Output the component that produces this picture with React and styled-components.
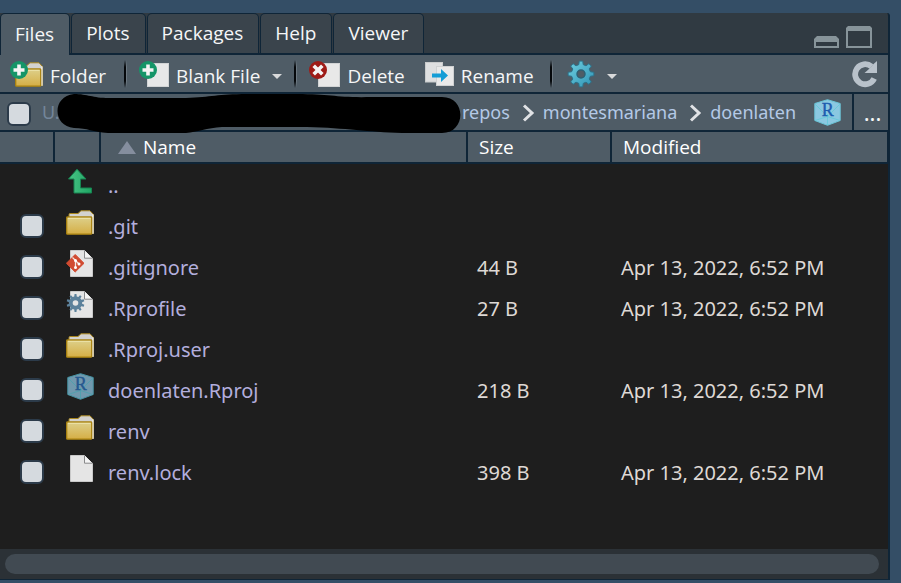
import React from "react";
import styled, { createGlobalStyle } from "styled-components";

const color = {
  desktop: "#344e66",
  line: "#0f2537",
  tabStrip: "#303a42",
  tab: "#3a444c",
  bar: "#4f5c66",
  text: "#f5f6f7",
  path: "#b4c9e6",
  body: "#1e1e1e",
  file: "#b3aedd",
  meta: "#ded9d5",
  box: "#d5dadf",
};

const GlobalStyle = createGlobalStyle`
  * { box-sizing: border-box; }
  body {
    margin: 0;
    background: ${color.desktop};
    font-family: "Open Sans", "Noto Sans", sans-serif;
  }
  button { font: inherit; color: inherit; background: none; border: 0; padding: 0; }
  a { color: inherit; text-decoration: none; }
  svg { display: block; flex: none; }
`;

const Desktop = styled.div`
  min-height: 100vh;
  padding: 13px 11px 3px 0;
  display: flex;
`;

const Panel = styled.section`
  flex: 1;
  min-width: 0;
  display: flex;
  flex-direction: column;
  border-right: 2px solid ${color.line};
  border-bottom: 1px solid ${color.line};
  border-top-right-radius: 3px;
  background: ${color.body};
  overflow: hidden;
`;

const TabStrip = styled.div`
  display: flex;
  align-items: flex-start;
  height: 42px;
  background: linear-gradient(${color.line}, ${color.line}) bottom / 100% 2px no-repeat ${color.tabStrip};
`;

const TabList = styled.div`
  display: flex;
`;

const Tab = styled.button`
  height: ${(p) => (p.$active ? 41 : 39)}px;
  margin: 1px 2px 0 1px;
  && {
    padding: 0 15px 0 14px;
    background: ${(p) => (p.$active ? color.bar : color.tab)};
    color: ${color.text};
  }
  border-radius: 4px 4px 0 0;
  box-shadow: 0 0 0 1px ${color.line};
  font-size: 19px;
  line-height: 39px;
`;

const WindowButtons = styled.div`
  margin-left: auto;
  padding: 13px 16px 0 0;
  display: flex;
  align-items: flex-end;
  gap: 7px;
`;

const Toolbar = styled.div`
  height: 39px;
  display: flex;
  align-items: center;
  padding: 0 10px;
  background: ${color.bar};
  border-bottom: 2px solid ${color.line};
  color: ${color.text};
  font-size: 19px;
`;

const ToolButton = styled.button`
  display: flex;
  align-items: center;
  height: 37px;
  margin-right: ${(p) => p.$after || 0}px;
  && { color: ${color.text}; }
`;

const ToolLabel = styled.span`
  padding: 5px 0 0 7px;
  line-height: 26px;
`;

const Caret = styled.span`
  margin: 5px 0 0 12px;
  border: 5px solid transparent;
  border-top-color: #d9dadb;
  border-bottom: 0;
`;

const Separator = styled.span`
  width: 3px;
  height: 28px;
  margin: 0 ${(p) => p.$after || 12}px 0 ${(p) => p.$before || 18}px;
  background:
    linear-gradient(transparent, #05080b 25%, #05080b 75%, transparent) left / 2px 100% no-repeat,
    linear-gradient(transparent, #6d7881 25%, #6d7881 75%, transparent) right / 1px 100% no-repeat;
`;

const Spacer = styled.span`
  flex: 1;
`;

const PathBar = styled.div`
  height: 38px;
  display: flex;
  background: ${color.bar};
  border-bottom: 2px solid ${color.line};
  font-family: "Noto Sans", "Open Sans", sans-serif;
  font-size: 18px;
  line-height: 36px;
`;

const CheckBox = styled.input`
  appearance: none;
  display: block;
  width: 24px;
  height: 24px;
  margin: 0;
  border: 2px solid #2c3b4a;
  border-radius: 6px;
  background: ${color.box};
  flex: none;
`;

const Crumbs = styled.nav`
  flex: 1;
  min-width: 0;
  display: flex;
  align-items: flex-start;
  padding-left: 7px;
  color: ${color.path};
  ${CheckBox} { margin-top: 8px; }
`;

const RootCrumb = styled.a`
  width: 15px;
  margin-left: 11px;
  && { color: #74869a; }
`;

const Redaction = styled.svg`
  position: relative;
  z-index: 1;
  width: 404px;
  height: 40px;
  margin-right: 1px;
`;

const CrumbIcon = styled.span`
  padding: ${(p) => (p.$project ? "5px 0 0 18px" : "10px 8px 0 12px")};
`;

const MoreButton = styled.button`
  width: 36px;
  && {
    padding: 0 0 0 3px;
    border-left: 2px solid ${color.line};
    color: ${color.text};
    font-size: 22px;
  }
`;

const FileArea = styled.div`
  flex: 1;
`;

const FileTable = styled.table`
  width: 100%;
  table-layout: fixed;
  border-collapse: separate;
  border-spacing: 0;
`;

const Col = styled.col`
  width: ${(p) => p.$w}px;
`;

const HeadCell = styled.th`
  height: 32px;
  padding: 0 0 0 ${(p) => p.$inset || 0}px;
  border-right: ${(p) => (p.$last ? 1 : 2)}px solid ${color.line};
  border-bottom: 2px solid ${color.line};
  background: ${color.bar};
  color: #ffffff;
  font-size: 19px;
  font-weight: 400;
  line-height: 30px;
  text-align: left;
`;

const SortLabel = styled.span`
  display: flex;
  align-items: center;
  gap: 7px;
`;

const Cell = styled.td`
  height: 41px;
  padding: 0 0 0 ${(p) => p.$inset || 0}px;
  color: ${color.meta};
  white-space: nowrap;
`;

const TextCell = styled(Cell)`
  padding-top: 2px;
  color: ${(p) => (p.$name ? color.file : color.meta)};
  font-family: "Noto Sans", "Open Sans", sans-serif;
  font-size: 20px;
  line-height: 39px;
`;

const IconHolder = styled.span`
  display: flex;
  align-items: center;
  justify-content: center;
  width: 28px;
  height: 28px;
  margin-bottom: 6px;
`;

const ScrollTrack = styled.div`
  height: 30px;
  padding: 5px 9px 5px 5px;
  background: #2b3136;
`;

const ScrollThumb = styled.div`
  height: 20px;
  border-radius: 10px;
  background: #414a52;
`;

const FolderShape = () => (
  <>
    <path d="M3 4.5 Q3 3.5 4 3.5 H12 L15 .8 H24 L27.5 4.5 V23.5 H3Z" fill="#d3d2cf" stroke="#a8861e" strokeWidth="1" />
    <path d="M26.8 4.5 V23.8" stroke="#e6e6e4" strokeWidth="1.8" />
    <rect x=".7" y="7" width="25" height="17.2" rx=".8" fill="url(#folderFill)" stroke="#a9820f" strokeWidth="1.3" />
    <path d="M2 8.3 H24.5" stroke="#eee5ad" />
  </>
);

const FolderIcon = () => (
  <svg width="28" height="25" viewBox="0 0 28 25"><FolderShape /></svg>
);

const Plus = ({ cx = 9, cy = 9 }) => (
  <>
    <circle cx={cx} cy={cy} r="9" fill="#159568" />
    <path d={`M${cx - 5.5} ${cy} h11 M${cx} ${cy - 5.5} v11`} stroke="#f4f4f4" strokeWidth="3.6" />
  </>
);

const NewFolderIcon = () => (
  <svg width="33" height="26" viewBox="0 0 33 26">
    <g transform="translate(5 1)"><FolderShape /></g>
    <Plus />
  </svg>
);

const BlankFileIcon = () => (
  <svg width="30" height="26" viewBox="0 0 30 26">
    <rect x="8.5" y="2.5" width="21" height="23" fill="#e8e8e8" stroke="#d2d4d5" />
    <Plus />
  </svg>
);

const DeleteIcon = () => (
  <svg width="31" height="26" viewBox="0 0 31 26">
    <rect x="9.5" y="2.5" width="21" height="23" fill="#e8e8e8" stroke="#d2d4d5" />
    <circle cx="9" cy="9" r="9" fill="#9e1b17" />
    <path d="M4.7 4.7 l8.6 8.6 M13.3 4.7 l-8.6 8.6" stroke="#f4f4f4" strokeWidth="3.6" />
  </svg>
);

const RenameIcon = () => (
  <svg width="29" height="24" viewBox="0 0 29 24">
    <rect x=".5" y=".5" width="17" height="19.5" fill="#dedfe0" stroke="#c9cbcc" />
    <rect x="11.5" y="4.5" width="17" height="19" fill="#e9e9e9" stroke="#cfd1d2" />
    <path d="M7 11.5 h9 v-4.5 l7 6.5 -7 6.5 v-4.5 h-9Z" fill="#149dd6" />
  </svg>
);

const gearPath = (cx, cy, r, teeth) => {
  const step = (Math.PI * 2) / teeth;
  const at = (radius, angle) =>
    `${(cx + radius * Math.sin(angle)).toFixed(2)} ${(cy - radius * Math.cos(angle)).toFixed(2)}`;
  const points = [];
  for (let i = 0; i < teeth; i += 1) {
    const a = i * step;
    points.push(at(r * 0.74, a - step * 0.3), at(r, a - step * 0.17), at(r, a + step * 0.17), at(r * 0.74, a + step * 0.3));
  }
  return `M${points.join(" L")}Z`;
};

const ToolGearIcon = () => (
  <svg width="28" height="28" viewBox="0 0 28 28">
    <path d={gearPath(14, 14, 13, 8)} fill="url(#gearFill)" stroke="#2d7189" strokeLinejoin="round" />
    <circle cx="14" cy="14" r="4" fill="#4f5c66" stroke="#2d6074" strokeWidth="1.5" />
  </svg>
);

const RefreshIcon = () => (
  <svg width="26" height="28" viewBox="0 0 26 28">
    <path d="M22.2 18.5 A10 10 0 1 1 19.5 6.5" fill="none" stroke="#b9c2cb" strokeWidth="5.8" />
    <path d="M25 1 V13 H12.5 L17 9 L21 4.5Z" fill="#b9c2cb" />
  </svg>
);

const ProjectIcon = ({ muted }) => (
  <svg width="27" height="27" viewBox="0 0 27 27">
    <path d="M13.5 .7 L26.2 4.5 V21.5 L13.5 26.3 L.8 21.5 V4.5Z" fill={muted ? "#7199ae" : "#8bc8e1"} stroke={muted ? "#4794a4" : "#6bc4d7"} />
    <path d="M13.5 15 V26 M1 5 L13.5 17.5 L26 5 M1 21.5 L13.5 17.5 L26 21.5" fill="none" stroke={muted ? "#52a0ae" : "#69c9d9"} strokeWidth="1" />
    <text x="13.8" y="16.5" textAnchor="middle" fontFamily="Liberation Serif, serif" fontSize="18" fill={muted ? "#24588f" : "#1d5daf"} stroke={muted ? "#24588f" : "#1d5daf"} strokeWidth=".4">R</text>
  </svg>
);

const Page = () => (
  <>
    <path d="M4.5 .5 H18.5 L26.5 8.5 V26.5 H4.5Z" fill="#e5e5e5" stroke="#c9c9c9" />
    <path d="M18.5 .5 V8.2 H26.5" fill="#f4f4f4" stroke="#88898a" />
  </>
);

const PageIcon = () => (
  <svg width="28" height="27" viewBox="0 0 28 27"><Page /></svg>
);

const GitIcon = () => (
  <svg width="28" height="27" viewBox="0 0 28 27">
    <Page />
    <path d="M9.2 4.5 L18 13.3 L9.2 22 L.4 13.3Z" fill="#d14b31" stroke="#d14b31" strokeLinejoin="round" />
    <path d="M6.5 7.5 L13 14 M9.5 10.5 V17.5" stroke="#f4e3df" strokeWidth="1.3" />
    <circle cx="9.5" cy="10.5" r="1.5" fill="#fff" />
    <circle cx="13" cy="14" r="1.5" fill="#fff" />
    <circle cx="9.5" cy="17.5" r="1.5" fill="#fff" />
  </svg>
);

const ConfigIcon = () => (
  <svg width="28" height="27" viewBox="0 0 28 27">
    <Page />
    <path d={gearPath(9.5, 12, 9, 10)} fill="#5c819b" />
    <circle cx="9.5" cy="12" r="2.8" fill="#e5e5e5" />
  </svg>
);

const UpIcon = () => (
  <svg width="28" height="27" viewBox="0 0 28 27">
    <path d="M11 1.2 L20 11 H14.5 V20 H25.5 V25 H8 V11 H2.5Z" fill="url(#upFill)" stroke="#168451" />
  </svg>
);

const ChevronIcon = () => (
  <svg width="13" height="18" viewBox="0 0 13 18">
    <path d="M2 1.5 L10 9 L2 16.5" fill="none" stroke="#e0e2e5" strokeWidth="3" />
  </svg>
);

const MinimizeIcon = () => (
  <svg width="25" height="12" viewBox="0 0 25 12">
    <path d="M3 0 H22 L25 3 V12 H0 V3Z" fill="#87949a" />
    <rect x="2" y="6" width="21" height="4" fill="#303a42" />
  </svg>
);

const MaximizeIcon = () => (
  <svg width="26" height="22" viewBox="0 0 26 22">
    <path d="M2 0 H24 L26 2 V22 H0 V2Z" fill="#87949a" />
    <rect x="2" y="5" width="22" height="15" fill="#303a42" />
  </svg>
);

const SortIcon = () => (
  <svg width="18" height="13" viewBox="0 0 18 13"><path d="M9 0 L18 13 H0Z" fill="#858e9e" /></svg>
);

const SharedFills = () => (
  <svg width="0" height="0" aria-hidden="true">
    <defs>
      <linearGradient id="folderFill" x1="0" y1="0" x2="0" y2="1">
        <stop offset="0" stopColor="#ddd08b" />
        <stop offset="1" stopColor="#d5ae45" />
      </linearGradient>
      <linearGradient id="upFill">
        <stop offset="0" stopColor="#49c386" />
        <stop offset="1" stopColor="#1fa563" />
      </linearGradient>
      <linearGradient id="gearFill" x1="0" y1="0" x2="1" y2="1">
        <stop offset="0" stopColor="#6fcfe0" />
        <stop offset="1" stopColor="#2f93b5" />
      </linearGradient>
    </defs>
  </svg>
);

const tabs = ["Files", "Plots", "Packages", "Help", "Viewer"];
const stamp = "Apr 13, 2022, 6:52 PM";
const files = [
  { name: ".git", Icon: FolderIcon },
  { name: ".gitignore", Icon: GitIcon, size: "44 B", modified: stamp },
  { name: ".Rprofile", Icon: ConfigIcon, size: "27 B", modified: stamp },
  { name: ".Rproj.user", Icon: FolderIcon },
  { name: "doenlaten.Rproj", Icon: () => <ProjectIcon muted />, size: "218 B", modified: stamp },
  { name: "renv", Icon: FolderIcon },
  { name: "renv.lock", Icon: PageIcon, size: "398 B", modified: stamp },
];

export default function App() {
  return (
    <>
      <GlobalStyle />
      <Desktop>
        <Panel>
          <TabStrip>
            <TabList role="tablist">
              {tabs.map((name, i) => (
                <Tab key={name} role="tab" aria-selected={i === 0} $active={i === 0}>{name}</Tab>
              ))}
            </TabList>
            <WindowButtons>
              <button aria-label="Minimize"><MinimizeIcon /></button>
              <button aria-label="Maximize"><MaximizeIcon /></button>
            </WindowButtons>
          </TabStrip>

          <Toolbar role="toolbar">
            <ToolButton><NewFolderIcon /><ToolLabel>Folder</ToolLabel></ToolButton>
            <Separator />
            <ToolButton><BlankFileIcon /><ToolLabel>Blank File</ToolLabel><Caret /></ToolButton>
            <Separator $before={12} />
            <ToolButton $after={20}><DeleteIcon /><ToolLabel>Delete</ToolLabel></ToolButton>
            <ToolButton><RenameIcon /><ToolLabel>Rename</ToolLabel></ToolButton>
            <Separator $before={16} $after={14} />
            <ToolButton aria-label="More file commands"><ToolGearIcon /><Caret /></ToolButton>
            <Spacer />
            <ToolButton aria-label="Refresh"><RefreshIcon /></ToolButton>
          </Toolbar>

          <PathBar>
            <Crumbs aria-label="Path">
              <CheckBox type="checkbox" aria-label="Select all files" />
              <RootCrumb href="#">U.</RootCrumb>
              <Redaction viewBox="0 0 404 40" aria-hidden="true">
                <path d="M17 0 C31 0 35 4 52 4 H129 C155 3 160 0 190 0 H240 C275 0 280 4 315 3 H385 C410 3 409 39 385 39 H345 C310 38 290 34 250 33 H165 C150 34 140 38 129 39 H51 C35 38 31 34 17 34 C-5 32 -5 2 17 0Z" fill="#000" />
              </Redaction>
              <a href="#repos">repos</a>
              <CrumbIcon><ChevronIcon /></CrumbIcon>
              <a href="#montesmariana">montesmariana</a>
              <CrumbIcon><ChevronIcon /></CrumbIcon>
              <a href="#doenlaten">doenlaten</a>
              <CrumbIcon $project><ProjectIcon /></CrumbIcon>
            </Crumbs>
            <MoreButton aria-label="Go to directory">...</MoreButton>
          </PathBar>

          <FileArea>
            <FileTable>
              <colgroup>
                <Col $w={55} /><Col $w={46} /><Col $w={367} /><Col $w={144} /><col />
              </colgroup>
              <thead>
                <tr>
                  <HeadCell aria-label="Selected" />
                  <HeadCell aria-label="Type" />
                  <HeadCell $inset={17}><SortLabel><SortIcon />Name</SortLabel></HeadCell>
                  <HeadCell $inset={11}>Size</HeadCell>
                  <HeadCell $inset={11} $last>Modified</HeadCell>
                </tr>
              </thead>
              <tbody>
                <tr>
                  <Cell />
                  <Cell $inset={11}><IconHolder><UpIcon /></IconHolder></Cell>
                  <TextCell $inset={7} $name><a href="#up">..</a></TextCell>
                  <Cell />
                  <Cell />
                </tr>
                {files.map(({ name, Icon, size, modified }) => (
                  <tr key={name}>
                    <Cell $inset={20}><CheckBox type="checkbox" aria-label={`Select ${name}`} /></Cell>
                    <Cell $inset={11}><IconHolder><Icon /></IconHolder></Cell>
                    <TextCell $inset={7} $name><a href={`#${name}`}>{name}</a></TextCell>
                    <TextCell $inset={9}>{size}</TextCell>
                    <TextCell $inset={9}>{modified}</TextCell>
                  </tr>
                ))}
              </tbody>
            </FileTable>
          </FileArea>

          <ScrollTrack><ScrollThumb /></ScrollTrack>
        </Panel>
      </Desktop>
      <SharedFills />
    </>
  );
}
